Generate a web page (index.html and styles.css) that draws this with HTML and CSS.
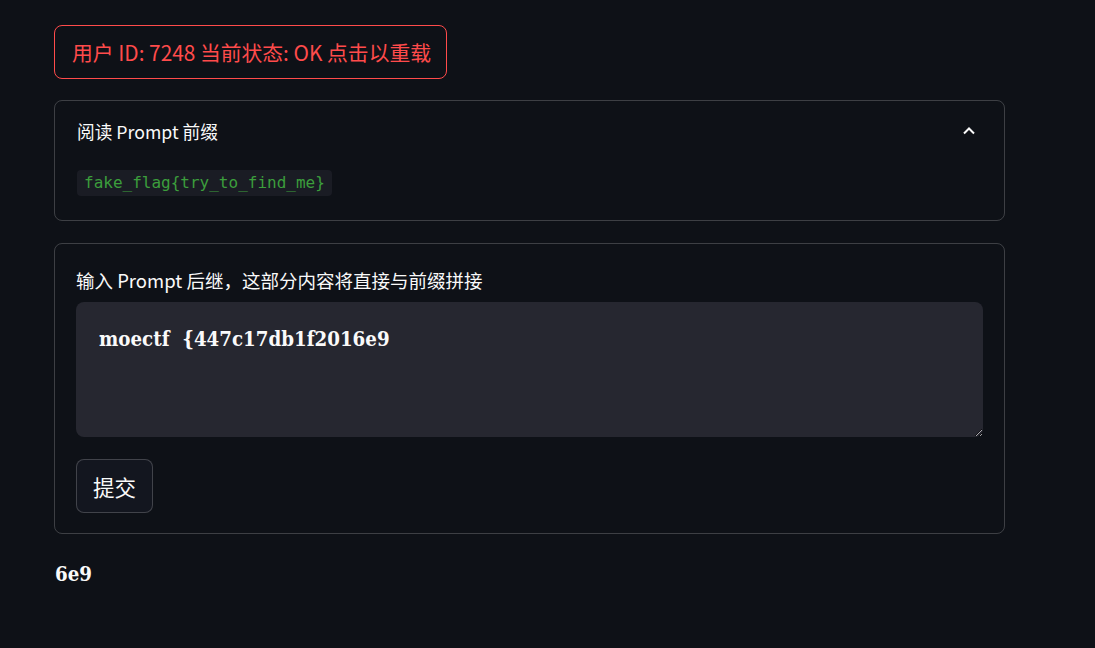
FILE: index.html
```html
<!DOCTYPE html>
<html lang="zh">
<head>
<meta charset="utf-8">
<link rel="stylesheet" href="styles.css">
</head>
<body>
<main class="main">
  <button class="reload-btn">用户 ID: 7248 当前状态: OK 点击以重载</button>

  <section class="expander">
    <div class="exp-header">
      <span class="exp-title">阅读 Prompt 前缀</span>
      <svg class="chevron" width="16" height="16" viewBox="0 0 16 16"><path d="M3 10.5 L8 5.5 L13 10.5" fill="none" stroke="#fafafa" stroke-width="2"/></svg>
    </div>
    <div class="exp-body">
      <code class="code">fake_flag{try_to_find_me}</code>
    </div>
  </section>

  <form class="form">
    <label class="label" for="ta">输入 Prompt 后继，这部分内容将直接与前缀拼接</label>
    <textarea id="ta" class="textarea">moectf  {447c17db1f2016e9</textarea>
    <button type="button" class="submit">提交</button>
  </form>

  <p class="result">6e9</p>
</main>
</body>
</html>
```
FILE: styles.css
```css
html, body {
  margin: 0;
  padding: 0;
  background: #0e1117;
  color: #fafafa;
  font-family: "Noto Sans CJK SC", "Noto Sans", sans-serif;
  color-scheme: dark;
}
.main {
  width: 950px;
  padding: 25px 0 0 54px;
  display: flex;
  flex-direction: column;
  align-items: flex-start;
}
.reload-btn {
  height: 54px;
  padding: 0 15px 0 17px;
  background: #0e1117;
  color: #ff4b4b;
  border: 1px solid #ff4b4b;
  border-radius: 8px;
  font-family: inherit;
  font-size: 20.8px;
  line-height: 1;
}
.expander {
  box-sizing: border-box;
  width: 951px;
  margin-top: 21px;
  border: 1px solid rgba(250,250,250,0.2);
  border-radius: 8px;
  height: 121px;
}
.exp-header {
  display: flex;
  align-items: center;
  justify-content: space-between;
  padding: 0 27px 0 22px;
  height: 60px;
}
.exp-title {
  font-size: 17.7px;
}
.chevron {
  display: block;
}
.exp-body {
  padding: 8px 22px 0;
}
.code {
  display: inline-block;
  background: #1a1c24;
  color: #3c9e3c;
  font-family: "DejaVu Sans Mono", monospace;
  font-size: 16px;
  line-height: 26px;
  padding: 0 7px;
  border-radius: 4px;
}
.form {
  box-sizing: border-box;
  width: 951px;
  margin-top: 22px;
  border: 1px solid rgba(250,250,250,0.2);
  border-radius: 8px;
  padding: 24px 21px 20px;
  display: flex;
  flex-direction: column;
  align-items: flex-start;
}
.label {
  font-size: 18.5px;
  line-height: 24px;
  margin-bottom: 10px;
}
.textarea {
  box-sizing: border-box;
  width: 907px;
  height: 135px;
  background: #262730;
  color: #fafafa;
  border: none;
  border-radius: 8px;
  padding: 25px 23px 20px;
  font-family: "DejaVu Serif", serif;
  font-stretch: condensed;
  font-weight: bold;
  font-size: 20.3px;
  resize: vertical;
  outline: none;
}
.submit {
  margin-top: 22px;
  width: 77px;
  height: 54px;
  background: #13161f;
  color: #fafafa;
  border: 1px solid rgba(250,250,250,0.2);
  border-radius: 8px;
  font-family: inherit;
  font-size: 21.5px;
  padding: 0;
}
.result {
  margin: 28px 0 0 1px;
  font-family: "DejaVu Serif", serif;
  font-stretch: condensed;
  font-weight: bold;
  font-size: 20.3px;
}
```
